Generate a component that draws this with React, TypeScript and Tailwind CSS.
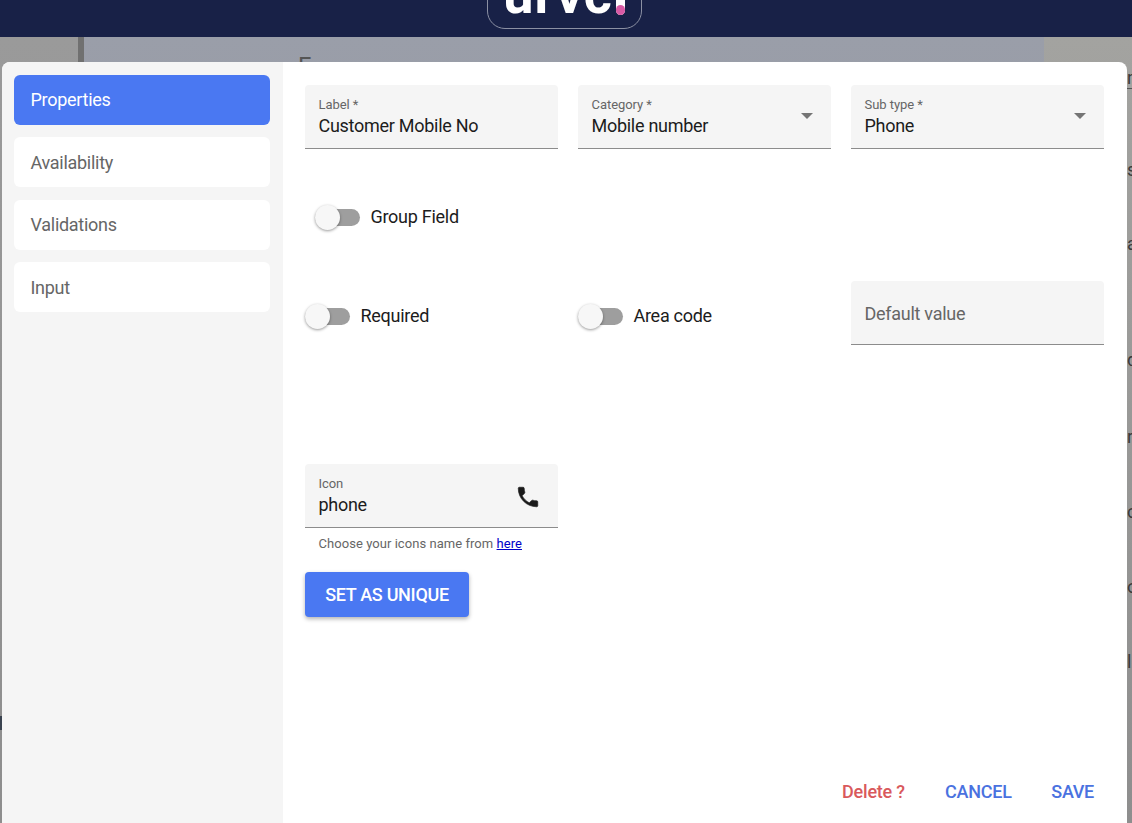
import React from 'react';

const font = { fontFamily: 'Roboto, sans-serif' };

// bits of the page text that stick out to the right of the dialog
const peeks = [
  { top: 66, text: 'n' },
  { top: 158, text: 's' },
  { top: 232, text: 'a' },
  { top: 348, text: 'd' },
  { top: 425, text: 'r' },
  { top: 500, text: 'c' },
  { top: 575, text: 'o' },
  { top: 650, text: 'l' },
];

const FilledField = ({ label, value, select, icon }: { label?: string; value?: string; select?: boolean; icon?: boolean }) => (
  <div className="relative h-16 w-full rounded-t bg-[#f5f5f5] border-b border-[#8c8c8c] px-[13.5px]">
    {label && <div className="pt-[12px] text-[13px] leading-[15px] tracking-[-0.05px] text-[#666666]">{label}</div>}
    {value && <div className="text-lg leading-[28px] tracking-[-0.28px] text-[#1c1c1c]">{value}</div>}
    {select && <div className="absolute right-[18px] top-[28px] h-0 w-0 border-x-[6.5px] border-t-[6.5px] border-x-transparent border-t-[#757575]" />}
    {icon && (
      <svg className="absolute right-[17px] top-[20px] h-[26px] w-[26px]" viewBox="0 0 24 24" fill="#1a1a1a" stroke="#1a1a1a" strokeWidth="0.6">
        <path d="M6.62 10.79c1.44 2.83 3.76 5.14 6.59 6.59l2.2-2.2c.27-.27.67-.36 1.02-.24 1.12.37 2.33.57 3.57.57.55 0 1 .45 1 1V20c0 .55-.45 1-1 1-9.39 0-17-7.61-17-17 0-.55.45-1 1-1h3.5c.55 0 1 .45 1 1 0 1.25.2 2.45.57 3.57.11.35.03.74-.25 1.02l-2.2 2.2z" />
      </svg>
    )}
  </div>
);

const Toggle = ({ label }: { label: string }) => (
  <div className="flex items-center">
    <div className="relative h-[17px] w-[45px] rounded-full bg-[#9e9e9e]">
      <div className="absolute left-0 -top-[4px] h-[25px] w-[25px] rounded-full bg-[#f7f7f7] shadow-[0_1px_3px_rgba(0,0,0,0.4)]" />
    </div>
    <span className="ml-[10.5px] text-lg leading-6 tracking-[-0.28px] text-[#1c1c1c]">{label}</span>
  </div>
);

const NavItem = ({ label, active }: { label: string; active?: boolean }) => (
  <div
    className={`flex h-[50px] items-center rounded-md px-[16.5px] text-lg tracking-[-0.28px] ${
      active ? 'bg-[#4a78f2] text-white' : 'bg-white pt-[1px] text-[#666666]'
    }`}
  >
    {label}
  </div>
);

const App = () => {
  return (
    <div className="relative h-[823px] w-[1132px] overflow-hidden bg-[#8e8e8e]" style={font}>
      {/* page behind the dialog */}
      <div className="relative z-0 flex h-[37px] justify-center overflow-hidden bg-[#182147]">
        <div className="relative -top-[20px] ml-[-4px] flex h-[49px] w-[155px] shrink-0 items-end justify-center rounded-[18px] border border-[#8b90a3] pb-[13px]">
          <span className="text-[54px] font-bold leading-[40px] tracking-[1px] text-white">urvc</span>
          <span className="relative ml-[3px] h-[34px] w-[9px] rounded-full bg-white">
            <span className="absolute bottom-0 left-0 h-[10px] w-[9px] rounded-full bg-[#d85aa5]" />
          </span>
        </div>
      </div>
      <div className="flex h-[786px]">
        <div className="w-[78px] bg-gradient-to-b from-[#9a9a9a] to-[#8e8e8e]" />
        <div className="w-[6px] bg-[#707070]" />
        <div className="w-[960px] bg-gradient-to-b from-[#9a9ea9] to-[#8f8f8f] pl-[214px] pt-[13px] text-2xl text-[#555555]">F</div>
        <div className="flex-1 bg-gradient-to-b from-[#a3a3a0] to-[#8e8e8e]" />
      </div>

      {peeks.map((p) => (
        <span key={p.top} className="absolute left-[1127px] text-lg leading-6 text-[#3a3a3a]" style={{ top: p.top }}>
          {p.text}
        </span>
      ))}
      <div className="absolute left-[1127px] top-[88px] h-px w-[5px] bg-[#555555]" />
      <div className="absolute left-0 top-[716px] h-[14px] w-[2px] bg-[#3a4350]" />

      {/* dialog */}
      <div className="absolute left-[2px] top-[62px] flex h-[780px] w-[1125px] overflow-hidden rounded-lg bg-white">
        <div className="flex w-[281px] shrink-0 flex-col gap-[12.4px] bg-[#f5f5f5] pl-[12px] pr-[13px] pt-[13px]">
          <NavItem label="Properties" active />
          <NavItem label="Availability" />
          <NavItem label="Validations" />
          <NavItem label="Input" />
        </div>

        <div className="relative flex-1 pl-[22px] pt-[23px]">
          <div className="grid w-[799px] grid-cols-3 gap-x-[20px]">
            <FilledField label="Label *" value="Customer Mobile No" />
            <FilledField label="Category *" value="Mobile number" select />
            <FilledField label="Sub type *" value="Phone" select />
          </div>

          <div className="mt-[56px] pl-[10px]">
            <Toggle label="Group Field" />
          </div>

          <div className="mt-[52px] grid w-[799px] grid-cols-3 gap-x-[20px]">
            <div className="pt-[23px]">
              <Toggle label="Required" />
            </div>
            <div className="pt-[23px]">
              <Toggle label="Area code" />
            </div>
            <div className="flex h-16 items-center rounded-t bg-[#f5f5f5] border-b border-[#8c8c8c] px-[13.5px] pt-[2px] text-lg tracking-[-0.28px] text-[#666666]">
              Default value
            </div>
          </div>

          <div className="mt-[119px] w-[253px]">
            <FilledField label="Icon" value="phone" icon />
            <div className="mt-[8px] px-[13.5px] text-[13px] leading-[15px] tracking-[0.05px] text-[#666666]">
              Choose your icons name from <a href="#" className="text-[#0000c8] underline">here</a>
            </div>
          </div>

          <button className="mt-[21px] h-[45px] w-[164px] rounded bg-[#4a78f2] text-lg font-medium tracking-[-0.3px] text-white shadow-[0_2px_4px_rgba(0,0,0,0.3)]">
            SET AS UNIQUE
          </button>

          <div className="absolute left-[559px] top-[718px] flex items-center text-lg font-medium leading-6 tracking-[-0.2px]">
            <span className="text-[#d9595c]">Delete ?</span>
            <span className="ml-[40px] text-[#4a72e0]">CANCEL</span>
            <span className="ml-[39.5px] tracking-[-0.3px] text-[#4a72e0]">SAVE</span>
          </div>
        </div>
      </div>
    </div>
  );
};

export default App;
